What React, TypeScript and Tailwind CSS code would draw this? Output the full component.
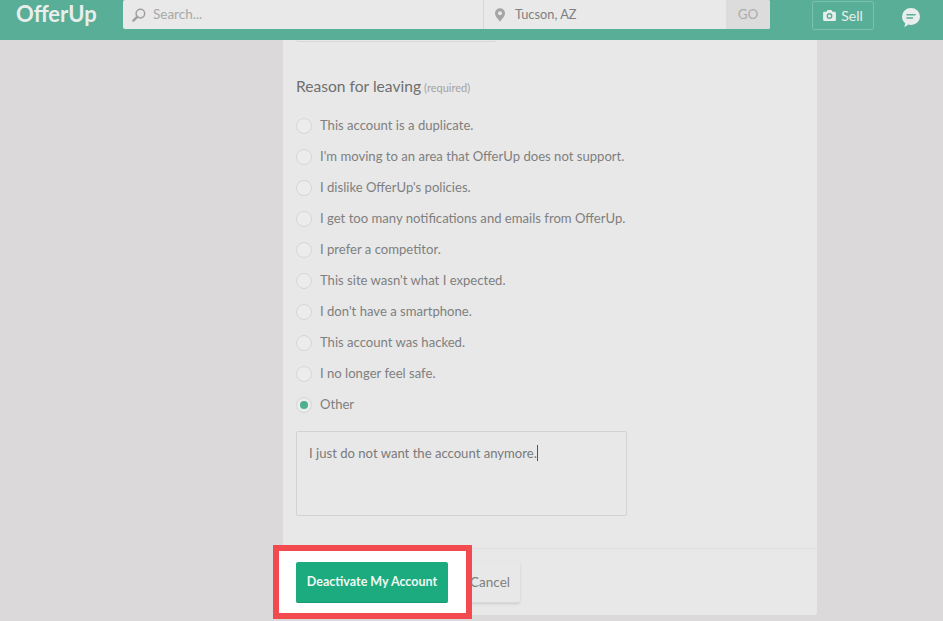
const reasons = [
  'This account is a duplicate.',
  "I'm moving to an area that OfferUp does not support.",
  "I dislike OfferUp's policies.",
  'I get too many notifications and emails from OfferUp.',
  'I prefer a competitor.',
  "This site wasn't what I expected.",
  "I don't have a smartphone.",
  'This account was hacked.',
  'I no longer feel safe.',
  'Other',
];

function Header() {
  return (
    <header className="h-10 bg-[#58ae96] flex items-start shrink-0">
      <div className="w-[123px] pl-[16px] text-[#e9eeec] text-[22px] leading-[27px] font-bold">
        OfferUp
      </div>
      <div className="w-[647px] h-[29px] bg-[#e9e9e9] rounded-[2px] flex text-[13.5px] text-[#a8a8a8]">
        <div className="w-[361px] flex items-center pl-[9px] gap-[7px] border-r border-[#d8d8d8]">
          <svg viewBox="0 0 14 14" className="w-[14px] h-[14px]" fill="none" stroke="#a0a0a0">
            <circle cx="8.4" cy="5.6" r="4.3" strokeWidth="1.5" />
            <path d="M5.2 8.8 1.4 12.6" strokeWidth="2.4" strokeLinecap="round" />
          </svg>
          <span>Search...</span>
        </div>
        <div className="flex-1 flex items-center pl-[11px] gap-[10px] text-[#808080]">
          <svg viewBox="0 0 12 16" className="w-[10px] h-[14px]">
            <path
              fillRule="evenodd"
              fill="#a5a5a5"
              d="M6 0a6 6 0 0 1 6 6c0 3.6-4 7.6-6 10C4 13.6 0 9.6 0 6a6 6 0 0 1 6-6Zm0 3.6a2.4 2.4 0 1 0 0 4.8 2.4 2.4 0 0 0 0-4.8Z"
            />
          </svg>
          <span className="text-[12.8px] pt-[1px]">Tucson, AZ</span>
        </div>
        <div className="w-[44px] bg-[#dcdcdc] rounded-r-[2px] flex items-center justify-center text-[#acacac]">GO</div>
      </div>
      <div className="ml-[42px] mt-[1px] w-[62px] h-[29px] border border-[#7dc0ad] rounded-[2px] flex items-center justify-center gap-[5px] text-[#e8eeec] text-[14px]">
        <svg viewBox="0 0 14 12" className="w-[13px] h-[11px]">
          <path
            fillRule="evenodd"
            fill="#e8eeec"
            d="M1.5 1.8h2.3L4.8 0h4.4l1 1.8h2.3A1.5 1.5 0 0 1 14 3.3v7.2a1.5 1.5 0 0 1-1.5 1.5h-11A1.5 1.5 0 0 1 0 10.500V3.300a1.500 1.500 0 0 1 1.500-1.500ZM7 3.400a3.200 3.200 0 1 0 0 6.400 3.200 3.200 0 0 0 0-6.400Zm0 1.500a1.700 1.700 0 1 1 0 3.400 1.700 1.700 0 0 1 0-3.400Z"
          />
        </svg>
        <span>Sell</span>
      </div>
      <div className="ml-[28px] mt-[8px]">
        <svg viewBox="0 0 18 19" className="w-[18px] h-[19px]">
          <path fill="#e9eeec" d="M9 0a9 8.500 0 0 1 0 17c-1 0-1.800-.1-2.600-.4C5.200 17.800 3.600 18.700 2 19c.7-1 1.200-2.300 1.300-3.700C1.300 13.800 0 11.500 0 8.500A9 8.500 0 0 1 9 0Z" />
          <path d="M5 6.800h8M5 10h5.500" stroke="#58ae96" strokeWidth="1.600" strokeLinecap="round" />
        </svg>
      </div>
    </header>
  );
}

function Reason({ label, checked }: { label: string; checked?: boolean }) {
  return (
    <label className="h-[31px] flex items-center gap-[8px] text-[13.1px] text-[#7f7f7f]">
      <span className="w-[16px] h-[16px] rounded-full border border-[#d6d6d6] bg-[#ececec] flex items-center justify-center">
        {checked && <span className="w-[8px] h-[8px] rounded-full bg-[#4fb08f]" />}
      </span>
      <span className="pt-[1px]">{label}</span>
    </label>
  );
}

export default function App() {
  return (
    <div className="w-[943px] h-[621px] overflow-hidden bg-[#dbd9da] flex flex-col relative font-['Lato',sans-serif]">
      <Header />
      <main className="w-[534px] ml-[283px] h-[575px] bg-[#e8e8e8] rounded-b-[3px] flex flex-col">
        <div className="pl-[13px] flex-1">
          <div className="w-[200px] h-[2px] border-b border-x border-[#d8d8d8] rounded-b-[2px]" />
          <h2 className="mt-[33px] h-[22px] flex items-baseline gap-[3px] text-[15.6px] leading-[22px] text-[#6f6f6f]">
            Reason for leaving <span className="text-[11px] text-[#a3a3a3]">(required)</span>
          </h2>
          <div className="mt-[13px] flex flex-col">
            {reasons.map((r) => (
              <Reason key={r} label={r} checked={r === 'Other'} />
            ))}
          </div>
          <div className="mt-[11px] w-[331px] h-[85px] border border-[#d2d2d2] rounded-[2px] px-[12px] py-[11px] text-[13.1px] leading-[20px] text-[#7a7a7a]">
            <span className="border-r border-[#555]">I just do not want the account anymore.</span>
          </div>
        </div>
        <div className="h-[67px] border-t border-[#dedede] pl-[13px] pt-[13px] flex gap-[12px]">
          <button className="w-[152px] h-[41px] bg-[#1cab7f] rounded-[2px]" />
          <button className="w-[60px] h-[41px] bg-[#e8e8e8] rounded-[2px] border-b border-[#d8d8d8] shadow-sm text-[13.5px] text-[#7f7f7f]">
            Cancel
          </button>
        </div>
      </main>
      {/* annotation around the button */}
      <div className="absolute left-[273px] top-[545px] w-[199px] h-[74px] border-[6px] border-[#f34a4f] bg-white flex items-center pl-[17px]">
        <div className="w-[152px] h-[41px] pt-[1px] bg-[#1cab7f] rounded-[2px] border-b border-[#159a72] text-[#eef8f4] text-[12.5px] font-bold flex items-center justify-center">
          Deactivate My Account
        </div>
      </div>
    </div>
  );
}
